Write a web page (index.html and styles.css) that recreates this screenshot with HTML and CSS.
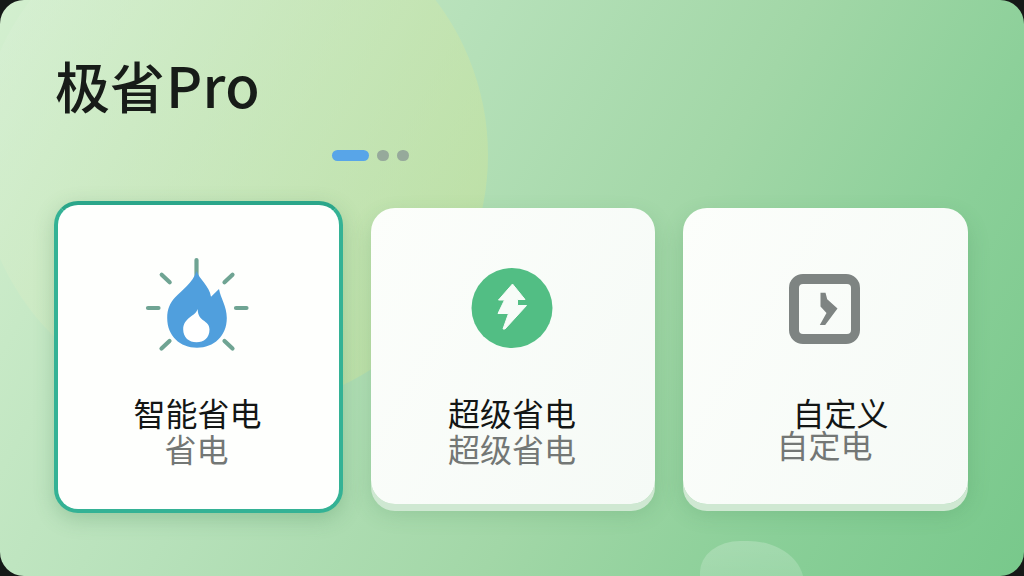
FILE: index.html
```
<!DOCTYPE html>
<html lang="zh-CN">
<head>
    <meta charset="UTF-8">
    <meta name="viewport" content="width=device-width, initial-scale=1.0">
    <title>极省Pro</title>
    <link rel="stylesheet" href="styles.css">
</head>
<body>
    <div class="screen">
        <h1 class="title">极省<span class="latin">Pro</span></h1>

        <div class="pager">
            <span class="dot active"></span>
            <span class="dot"></span>
            <span class="dot"></span>
        </div>

        <div class="cards">
            <div class="card selected">
                <svg class="icon" width="110" height="110" viewBox="0 0 110 110">
                    <g stroke="#6fa493" stroke-width="4.200" stroke-linecap="round">
                        <path d="M54.500 8v16M19.700 22.700l8 7.500M90.500 22.700l-8 7.500M6 56H16.500M94 56h10.500M27.500 89l-8 7.500M82.500 89l8 7.500"/>
                    </g>
                    <path fill="#509fdd" d="M54.700 19C57 27 67.500 34 69 44.700L77 37C78.500 46 84.800 54 84.800 66C84.800 84 72 95.700 55 95.700S25.200 84 25.200 66C25.200 57 28 51 33 45.500C40 38 50.500 31 54.700 19z"/>
                    <path fill="#fff" d="M55.700 57C53.500 64.500 41.200 65.500 41.200 77.500C41.200 85.500 47 90.300 54.500 90.300S67.500 86 67.500 77.500C67.500 67.500 55.700 70.500 55.700 57z"/>
                </svg>
                <div class="name">智能省电</div>
                <div class="desc">省电</div>
            </div>

            <div class="card">
                <svg class="icon" width="110" height="110" viewBox="0 0 110 110">
                    <ellipse cx="55" cy="56" rx="40.500" ry="40" fill="#52be84"/>
                    <path fill="#f7fcf8" stroke="#f7fcf8" stroke-linejoin="round" d="M55.500 32L68 47.500H60.500V53.500H69.500L48 77H46L51.500 61.500H41L47.500 48H41.500z"/>
                </svg>
                <div class="name">超级省电</div>
                <div class="desc">超级省电</div>
            </div>

            <div class="card custom">
                <svg class="icon" width="110" height="110" viewBox="0 0 110 110">
                    <path fill="#7e8482" fill-rule="evenodd" d="M33 22H76A14 14 0 0 1 90 36V78A14 14 0 0 1 76 92H33A14 14 0 0 1 19 78V36A14 14 0 0 1 33 22zM33 32A4 4 0 0 0 29 36V78A4 4 0 0 0 33 82H77A4 4 0 0 0 81 78V36A4 4 0 0 0 77 32z"/>
                    <path fill="#7e8482" d="M50.500 40.700h5l1.700 6.500l10.300 9.300L55.200 73H49.800L56.500 61L50.500 54.500z"/>
                </svg>
                <div class="name">自定义</div>
                <div class="desc">自定电</div>
            </div>
        </div>
    </div>
</body>
</html>
```
FILE: styles.css
```
* {
    box-sizing: border-box;
}

body {
    margin: 0;
    background: #151917;
    font-family: "Noto Sans CJK SC", sans-serif;
}

.screen {
    position: relative;
    width: 1024px;
    height: 576px;
    padding: 44px 56px 0 54px;
    border-radius: 24px;
    overflow: hidden;
    background: linear-gradient(120deg, #d3efcf 0%, #b7e1ba 35%, #a2d7a7 60%, #8acf98 80%, #78c88b 100%);
}

/* background bubbles */
.screen::before,
.screen::after {
    content: "";
    position: absolute;
    border-radius: 50%;
}

.screen::before {
    left: -22px;
    top: -100px;
    width: 510px;
    height: 510px;
    background: linear-gradient(115deg, rgba(218, 240, 215, 0.4) 10%, rgba(204, 228, 158, 0.5) 85%);
}

.screen::after {
    left: 700px;
    top: 541px;
    width: 104px;
    height: 80px;
    border-radius: 42% 58% 50% 50%;
    background: linear-gradient(rgba(255, 255, 255, 0.22), rgba(255, 255, 255, 0.1));
}

.title {
    position: relative;
    margin: 0 0 0 1px;
    height: 106px;
    font-size: 55px;
    line-height: 80px;
    font-weight: 500;
    color: #171c18;
}

.title .latin {
    margin-left: 1px;
    font-size: 56px;
    letter-spacing: 0.3px;
}

.pager {
    position: relative;
    display: flex;
    gap: 8px;
    height: 51px;
    margin-left: 278px;
}

.dot {
    width: 12px;
    height: 11px;
    border-radius: 6px;
    background: #96a99b;
}

.dot.active {
    width: 37px;
    background: #58a5e8;
}

.cards {
    position: relative;
    z-index: 1;
    display: grid;
    grid-template-columns: 289px 284px 285px;
    column-gap: 28px;
}

.card {
    display: flex;
    flex-direction: column;
    align-items: center;
    height: 296px;
    margin-top: 7px;
    padding-top: 44px;
    border-radius: 24px;
    background: linear-gradient(120deg, #fcfefb, #f5faf6);
    box-shadow: 0 7px 0 #cfe8d2, 0 9px 22px rgba(50, 120, 70, 0.2);
}

.card.selected {
    height: 312px;
    margin-top: 0;
    padding-top: 47px;
    border: 4px solid #34b295;
    border-top-color: #2ba68a;
    background: #fefffd;
    box-shadow: 0 6px 20px rgba(50, 120, 70, 0.25);
}

.card .icon {
    flex: none;
    margin-right: 2px;
}

.selected .icon {
    margin-right: 4px;
}

.name,
.desc {
    margin-right: 2px;
    font-size: 32px;
    line-height: 36px;
    white-space: nowrap;
}

.name {
    margin-top: 32px;
    color: #131615;
    font-weight: 400;
}

.desc {
    color: #737775;
    font-weight: 400;
}

.selected .desc {
    margin-right: 4px;
}

.custom .name {
    margin-left: 32px;
}

.custom .desc {
    margin-top: -4px;
}
```
